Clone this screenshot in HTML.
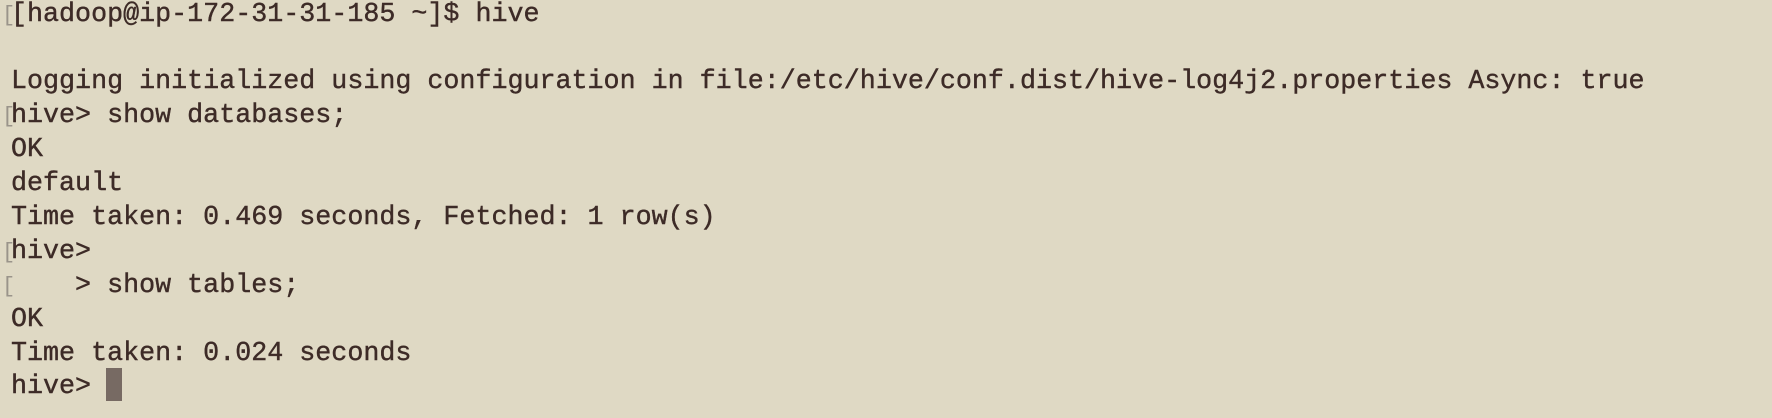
<!DOCTYPE html>
<html><head><meta charset="utf-8"><style>
html,body{margin:0;padding:0;}
body{width:1772px;height:418px;background:#dfd9c4;overflow:hidden;position:relative;}
.t{position:absolute;left:11px;top:-1.5px;font-family:"Liberation Mono","DejaVu Sans Mono",monospace;font-size:26.7px;line-height:33.9px;color:#3d2b27;white-space:pre;-webkit-text-stroke:0.4px #3d2b27;}
.m{position:absolute;left:2px;font-family:"Liberation Mono",monospace;font-size:22px;color:#9a948a;}
.cur{position:absolute;left:106px;top:368px;width:16px;height:33px;background:#776a63;}
</style></head><body>
<div class="m" style="top:3px">[</div>
<div class="m" style="top:104px">[</div>
<div class="m" style="top:240px">[</div>
<div class="m" style="top:274px">[</div>
<div class="t">[hadoop@ip-172-31-31-185 ~]$ hive

Logging initialized using configuration in file:/etc/hive/conf.dist/hive-log4j2.properties Async: true
hive&gt; show databases;
OK
default
Time taken: 0.469 seconds, Fetched: 1 row(s)
hive&gt;
    &gt; show tables;
OK
Time taken: 0.024 seconds
hive&gt; </div>
<div class="cur"></div>
</body></html>
